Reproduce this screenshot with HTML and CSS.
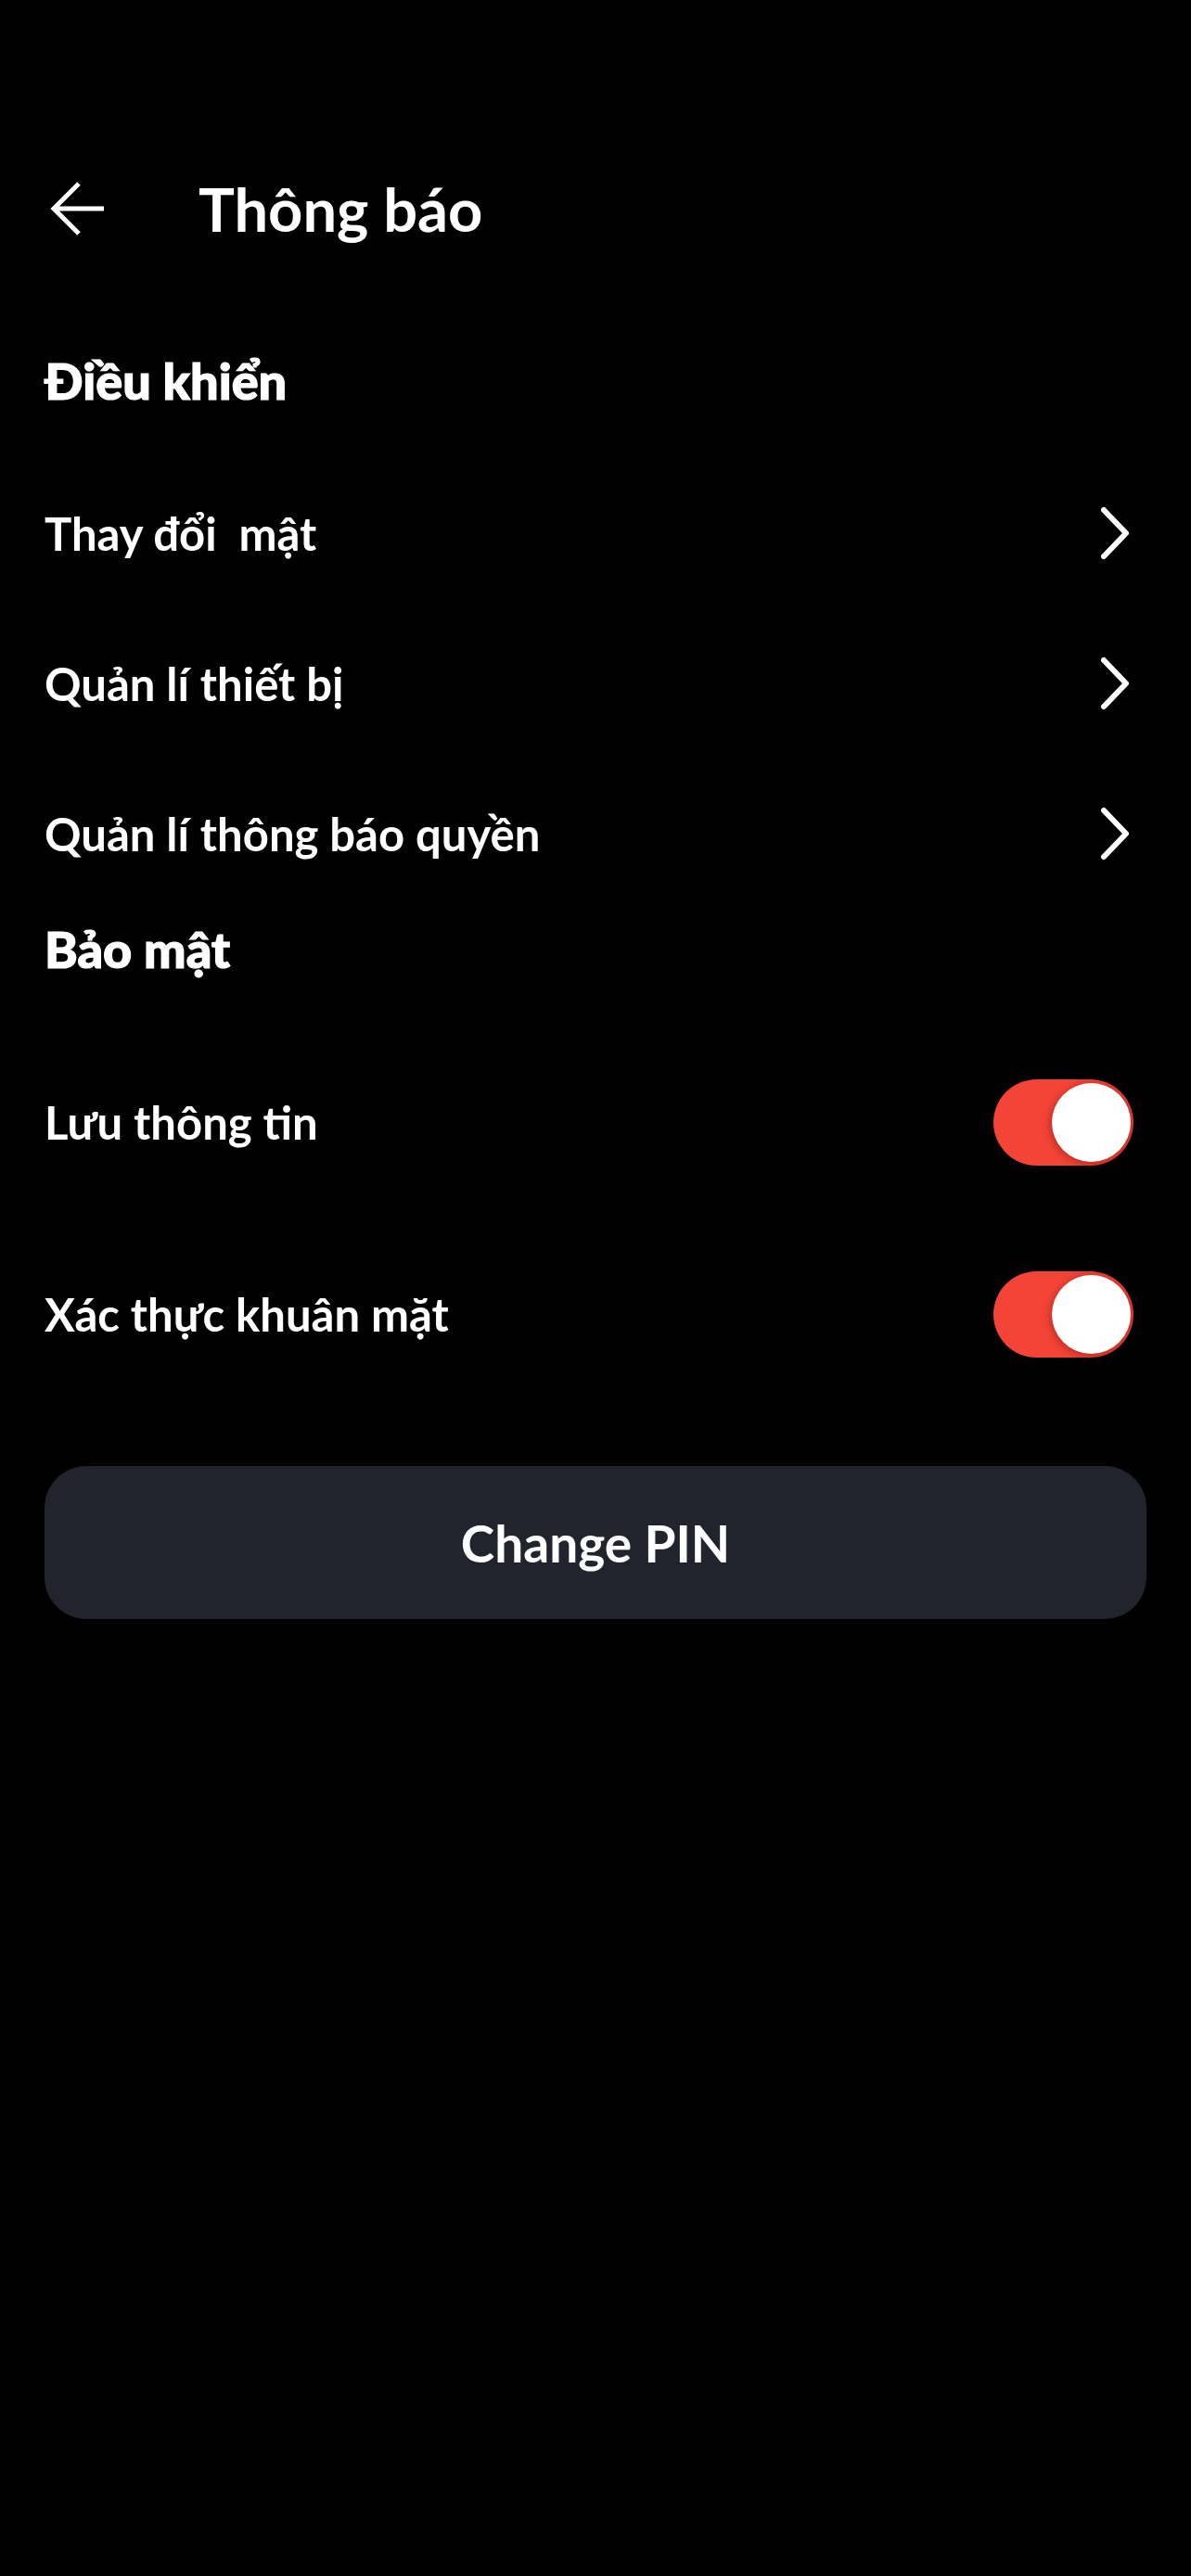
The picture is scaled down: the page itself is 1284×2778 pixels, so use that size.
FILE: index.html
```html
<!DOCTYPE html>
<html lang="vi">
<head>
<meta charset="utf-8">
<title>Thông báo</title>
<link rel="stylesheet" href="styles.css">
</head>
<body>
<div class="screen">
  <header class="topbar">
    <svg class="back" viewBox="0 0 60 60" width="60" height="60">
      <path d="M58 30 H4 M31 3 L4 30 L31 57" fill="none" stroke="#fff" stroke-width="5"/>
    </svg>
    <h1 class="title">Thông báo</h1>
  </header>

  <h2 class="section first">Điều khiển</h2>
  <div class="list">
    <div class="row">
      <span class="label">Thay đổi&nbsp; mật</span>
      <svg class="chev" viewBox="0 0 40 64" width="40" height="64"><path d="M10 7 L34 32 L10 57" fill="none" stroke="#fff" stroke-width="6" stroke-linecap="round" stroke-linejoin="round"/></svg>
    </div>
    <div class="row">
      <span class="label">Quản lí thiết bị</span>
      <svg class="chev" viewBox="0 0 40 64" width="40" height="64"><path d="M10 7 L34 32 L10 57" fill="none" stroke="#fff" stroke-width="6" stroke-linecap="round" stroke-linejoin="round"/></svg>
    </div>
    <div class="row">
      <span class="label">Quản lí thông báo quyền</span>
      <svg class="chev" viewBox="0 0 40 64" width="40" height="64"><path d="M10 7 L34 32 L10 57" fill="none" stroke="#fff" stroke-width="6" stroke-linecap="round" stroke-linejoin="round"/></svg>
    </div>
  </div>

  <h2 class="section second">Bảo mật</h2>
  <div class="toggles">
    <div class="row">
      <span class="label">Lưu thông tin</span>
      <span class="switch"><span class="knob"></span></span>
    </div>
    <div class="row">
      <span class="label">Xác thực khuân mặt</span>
      <span class="switch"><span class="knob"></span></span>
    </div>
  </div>

  <button class="pin-btn">Change PIN</button>
</div>
</body>
</html>
```

FILE: styles.css
```css
* { box-sizing: border-box; }
html, body {
  margin: 0;
  background: #000;
}
body {
  font-family: Lato, "Noto Sans", sans-serif;
  color: #fff;
  min-height: 2778px;
}
.screen {
  padding: 180px 48px 0 48px;
}
.topbar {
  display: flex;
  align-items: center;
  height: 90px;
}
.back {
  display: block;
  margin-left: 6px;
  flex: none;
}
.title {
  margin: 0 0 0 100px;
  font-size: 65px;
  font-weight: 700;
  line-height: 90px;
}
.section {
  margin: 0;
  font-size: 54px;
  font-weight: 900;
  line-height: 60px;
  -webkit-text-stroke: 1.2px #fff;
}
.section.first { margin-top: 111px; }
.section.second { margin-top: 40px; }
.list {
  display: flex;
  flex-direction: column;
  gap: 52px;
  margin-top: 79px;
}
.row {
  display: flex;
  align-items: center;
  justify-content: space-between;
  height: 110px;
}
.label {
  font-size: 49px;
  font-weight: 700;
}
.chev {
  display: block;
  margin-right: 16px;
}
.toggles {
  display: flex;
  flex-direction: column;
  gap: 97px;
  margin-top: 101px;
}
.switch {
  position: relative;
  display: block;
  width: 151px;
  height: 93px;
  border-radius: 47px;
  background: linear-gradient(90deg, #f44438 0%, #f44438 55%, #e53d33 80%, #dd3a31 100%);
  margin-right: 14px;
}
.knob {
  position: absolute;
  top: 4px;
  right: 3px;
  width: 85px;
  height: 85px;
  border-radius: 50%;
  background: #fff;
  box-shadow: -2px 2px 8px rgba(120, 20, 10, 0.45);
}
.pin-btn {
  display: block;
  width: 100%;
  height: 165px;
  margin-top: 109px;
  border: none;
  border-radius: 45px;
  background: #21242d;
  color: #fff;
  font-family: Lato, "Noto Sans", sans-serif;
  font-size: 55px;
  font-weight: 700;
}
```
